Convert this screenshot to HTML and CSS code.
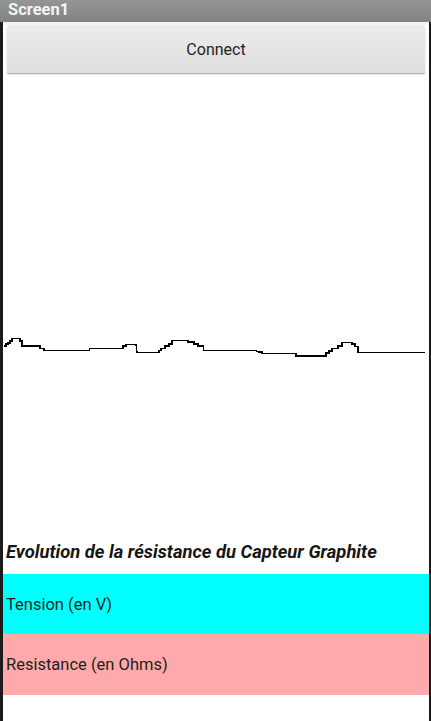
FILE: index.html
```html
<!DOCTYPE html>
<html lang="fr">
<head>
  <meta charset="UTF-8">
  <title>Screen1</title>
  <link rel="stylesheet" href="styles.css">
</head>
<body>
  <div class="titlebar">Screen1</div>
  <div class="screen">
    <div class="btn-row">
      <button class="connect" type="button">Connect</button>
    </div>

    <div class="chart">
      <svg width="426" height="460" viewBox="3 77 426 460">
        <polyline class="trace" points="4,346 6,346 6,344 8,344 8,343 10,343 10,341 12,341 12,338.5 20,338.5 20,341 22,341 22,346 40,346 40,348.5 44,348.5 44,350.5 89,350.5 90,348.5 123,348.5 123,346 126,346 126,344.5 136,344.5 137,352.5 159,352.5 159,350.5 161,350.5 161,348.5 165,348.5 165,346 169,346 169,344 172,344 172,340.5 188,340.5 188,342 194,342 194,344 198,344 198,346 203,346 204,350.5 256,350.5 258,352 262,352 262,353.7 296,353.7 296,356 326,356 326,353 329,353 329,351 332,351 332,348.5 338,348.5 338,346 342,346 342,342.5 352,342.5 352,344 355,344 355,346.5 358,346.5 358,352.3 425,352.3"/>
      </svg>
    </div>

    <h3 class="chart-title">Evolution de la résistance du Capteur Graphite</h3>

    <div class="band band-tension">Tension (en V)</div>
    <div class="band band-resistance">Resistance (en Ohms)</div>
  </div>
</body>
</html>
```

FILE: styles.css
```css
body {
  margin: 0;
  padding: 0;
  background-color: #1b1b1b;
  font-family: Roboto, 'Noto Sans', sans-serif;
  width: 431px;
  height: 721px;
  overflow: hidden;
}

.titlebar {
  height: 22px;
  line-height: 20px;
  padding-left: 8px;
  background: linear-gradient(#959595, #828282);
  color: #f4f4f4;
  font-weight: bold;
  font-size: 16.5px;
}

.screen {
  margin: 0 2px 0 3px;
  background-color: white;
  height: 699px;
  border-top: 3px solid #f2f2f2;
  box-sizing: border-box;
}

.btn-row {
  padding: 0 4px;
}

.connect {
  display: block;
  width: 100%;
  height: 48px;
  border: none;
  border-radius: 2px;
  background: linear-gradient(#ececec, #dedede);
  box-shadow: 0 1px 1px #a9a9a9, 0 2px 2px rgba(0, 0, 0, 0.08);
  color: #1e1e1e;
  font-family: Roboto, sans-serif;
  font-size: 16px;
  padding: 0;
}

.chart {
  margin-top: 4px;
  height: 460px;
}

.chart svg {
  display: block;
}

.trace {
  fill: none;
  stroke: #000;
  stroke-width: 1.4;
  shape-rendering: crispEdges;
}

.chart-title {
  margin: 0;
  height: 37px;
  line-height: 30px;
  padding-left: 3px;
  font-size: 18.4px;
  font-weight: bold;
  font-style: italic;
  color: #161616;
}

.band {
  padding-left: 3px;
  font-size: 16.5px;
  color: #1e1e1e;
  display: flex;
  align-items: center;
}

.band-tension {
  height: 60px;
  background-color: #00ffff;
}

.band-resistance {
  height: 61px;
  background-color: #ffaaaa;
}
```
